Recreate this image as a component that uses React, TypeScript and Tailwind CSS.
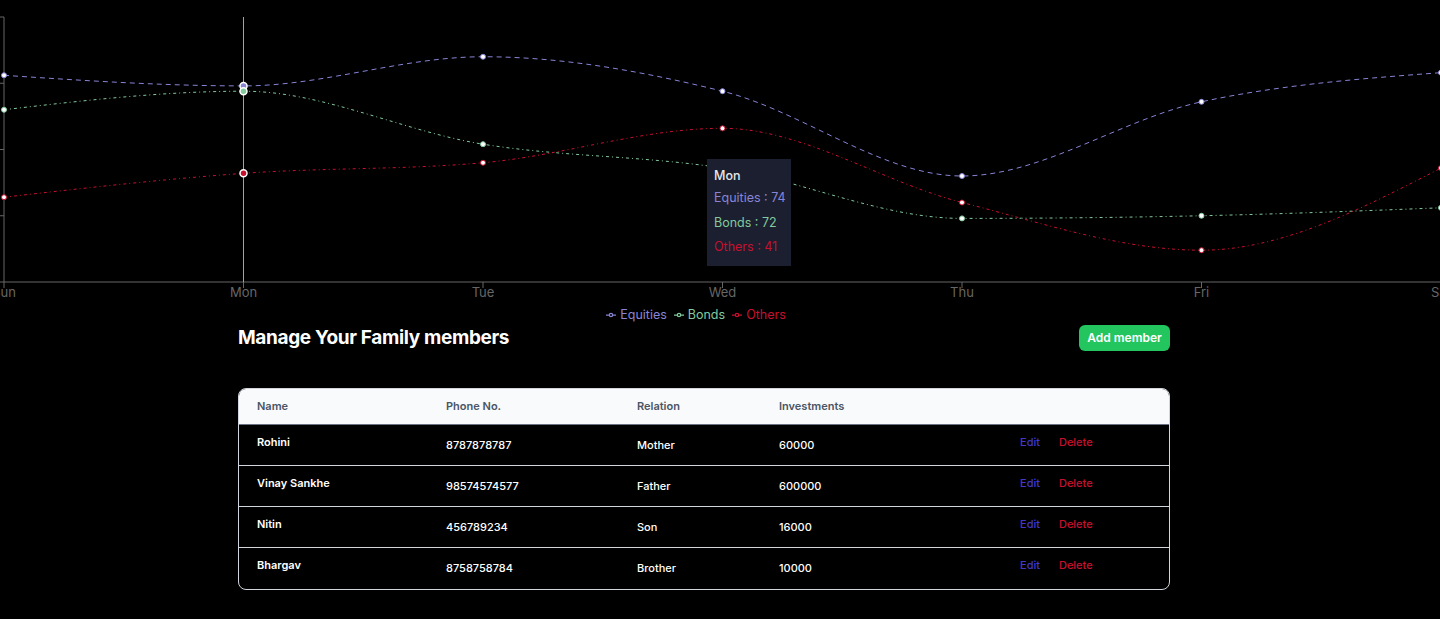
import React from 'react';

type Pt = { x: number; y: number };

const days = ['Sun', 'Mon', 'Tue', 'Wed', 'Thu', 'Fri', 'Sat'];
const series = [
  { name: 'Equities', color: '#8884d8', dash: '5 4', values: [78, 74, 85, 72, 40, 68, 79] },
  { name: 'Bonds', color: '#82ca9d', dash: '3 3 1 3', values: [65, 72, 52, 43, 24, 25, 28] },
  { name: 'Others', color: '#c8102e', dash: '3 3 1 3', values: [32, 41, 45, 58, 30, 12, 43] }
];

const members = [
  { name: 'Rohini', phone: '8787878787', relation: 'Mother', investments: '60000' },
  { name: 'Vinay Sankhe', phone: '98574574577', relation: 'Father', investments: '600000' },
  { name: 'Nitin', phone: '456789234', relation: 'Son', investments: '16000' },
  { name: 'Bhargav', phone: '8758758784', relation: 'Brother', investments: '10000' }
];

const X0 = 4;
const STEP = 239.5;
const TOP = 17;
const BOTTOM = 282;
const xAt = (i: number) => X0 + i * STEP;
const yAt = (v: number) => BOTTOM - (v * (BOTTOM - TOP)) / 100;

const sign = (n: number) => (n < 0 ? -1 : 1);

// d3 curveMonotoneX, same as recharts type="monotone"
function monotonePath(pts: Pt[]) {
  const n = pts.length;
  const s: number[] = [];
  for (let i = 0; i < n - 1; i++) s.push((pts[i + 1].y - pts[i].y) / (pts[i + 1].x - pts[i].x));
  const t: number[] = new Array(n).fill(0);
  for (let i = 1; i < n - 1; i++) {
    const h0 = pts[i].x - pts[i - 1].x;
    const h1 = pts[i + 1].x - pts[i].x;
    const p = (s[i - 1] * h1 + s[i] * h0) / (h0 + h1);
    t[i] = (sign(s[i - 1]) + sign(s[i])) * Math.min(Math.abs(s[i - 1]), Math.abs(s[i]), 0.5 * Math.abs(p)) || 0;
  }
  t[0] = (3 * s[0] - t[1]) / 2;
  t[n - 1] = (3 * s[n - 2] - t[n - 2]) / 2;
  let d = `M${pts[0].x},${pts[0].y}`;
  for (let i = 0; i < n - 1; i++) {
    const dx = (pts[i + 1].x - pts[i].x) / 3;
    d += `C${pts[i].x + dx},${pts[i].y + dx * t[i]},${pts[i + 1].x - dx},${pts[i + 1].y - dx * t[i + 1]},${pts[i + 1].x},${pts[i + 1].y}`;
  }
  return d;
}

function LegendIcon({ color }: { color: string }) {
  return (
    <svg width="10" height="10" viewBox="0 0 32 32" className="mr-[4px]">
      <path
        strokeWidth="4"
        fill="none"
        stroke={color}
        d="M0,16h10.666666666666666A5.333333333333333,5.333333333333333,0,1,1,21.333333333333332,16H32M21.333333333333332,16A5.333333333333333,5.333333333333333,0,1,1,10.666666666666666,16"
      />
    </svg>
  );
}

function Chart() {
  const active = 1;
  return (
    <div className="relative h-[304px] w-full overflow-hidden">
      <svg width="1440" height="304" className="block">
        {/* y axis */}
        <line x1={X0} y1={TOP} x2={X0} y2={BOTTOM} stroke="#666" />
        {[0, 25, 50, 75, 100].map(v => (
          <line key={v} x1={X0 - 6} y1={yAt(v)} x2={X0} y2={yAt(v)} stroke="#666" />
        ))}
        {/* x axis */}
        <line x1={X0} y1={BOTTOM} x2={1450} y2={BOTTOM} stroke="#666" />
        {days.map((d, i) => (
          <g key={d}>
            <line x1={xAt(i)} y1={BOTTOM} x2={xAt(i)} y2={BOTTOM + 6} stroke="#666" />
            <text x={xAt(i)} y={297} textAnchor="middle" fill="#666" fontSize="13" fontFamily="Inter, sans-serif">
              {d}
            </text>
          </g>
        ))}
        {/* cursor */}
        <line x1={xAt(active)} y1={TOP} x2={xAt(active)} y2={BOTTOM} stroke="#a3a3a3" />
        {series.map(s => {
          const pts = s.values.map((v, i) => ({ x: xAt(i), y: yAt(v) }));
          return (
            <g key={s.name}>
              <path d={monotonePath(pts)} fill="none" stroke={s.color} strokeWidth="1" strokeDasharray={s.dash} />
              {pts.map((p, i) =>
                i === active ? null : <circle key={i} cx={p.x} cy={p.y} r="2.5" fill="#fff" stroke={s.color} strokeWidth="1" />
              )}
            </g>
          );
        })}
        {series.map(s => (
          <circle key={s.name} cx={xAt(active)} cy={yAt(s.values[active])} r="3.5" fill={s.color} stroke="#fff" strokeWidth="1.5" />
        ))}
      </svg>
      <div className="absolute left-[707px] top-[159px] h-[107px] w-[84px] whitespace-nowrap bg-[#1b1f2f] px-[7px] text-[12.5px]">
        <div className="mt-[9px] h-[16px] leading-[16px] font-medium text-[#e5e7eb]">Mon</div>
        <div className="mt-[2px] h-[25px] leading-[24px] text-[#8884d8]">Equities : 74</div>
        <div className="h-[24px] leading-[24px] text-[#82ca9d]">Bonds : 72</div>
        <div className="h-[24px] leading-[24px] text-[#c8102e]">Others : 41</div>
      </div>
    </div>
  );
}

export default function App() {
  return (
    <div className="min-h-screen w-full bg-black font-['Inter',sans-serif] text-white">
      <Chart />
      <div className="flex h-[21px] items-center justify-center gap-[7px] pr-[48px] pt-[1px] text-[12.5px]">
        {series.map(s => (
          <div key={s.name} className="flex items-center" style={{ color: s.color }}>
            <LegendIcon color={s.color} />
            <span>{s.name}</span>
          </div>
        ))}
      </div>
      <div className="ml-[238px] w-[932px]">
        <div className="flex h-[26px] items-center justify-between">
          <h1 className="text-[19px] font-bold tracking-[-0.35px] text-white">Manage Your Family members</h1>
          <button className="h-[26px] w-[91px] rounded-md bg-[#22c55e] text-[12px] font-semibold text-white">Add member</button>
        </div>
        <div className="mt-[37px] overflow-hidden rounded-lg border border-gray-300">
          <div className="grid h-[36px] grid-cols-[189px_191px_142px_241px_1fr] items-center border-b border-gray-500 bg-gray-50 text-[11px] font-semibold text-gray-600">
            <div className="pl-[18px]">Name</div>
            <div className="pl-[18px]">Phone No.</div>
            <div className="pl-[18px]">Relation</div>
            <div className="pl-[18px]">Investments</div>
            <div />
          </div>
          {members.map((m, i) => (
            <div
              key={m.name}
              className={`grid h-[41px] grid-cols-[189px_191px_142px_241px_1fr] items-center text-[11px] font-medium ${i < members.length - 1 ? 'border-b border-gray-300' : ''}`}
            >
              <div className="mb-[6px] pl-[18px] font-semibold">{m.name}</div>
              <div className="pl-[18px]">{m.phone}</div>
              <div className="pl-[18px]">{m.relation}</div>
              <div className="pl-[18px]">{m.investments}</div>
              <div className="mb-[6px] flex gap-[19px] pl-[18px]">
                <span className="text-[#4338ca]">Edit</span>
                <span className="text-[#c8102e]">Delete</span>
              </div>
            </div>
          ))}
        </div>
      </div>
    </div>
  );
}
